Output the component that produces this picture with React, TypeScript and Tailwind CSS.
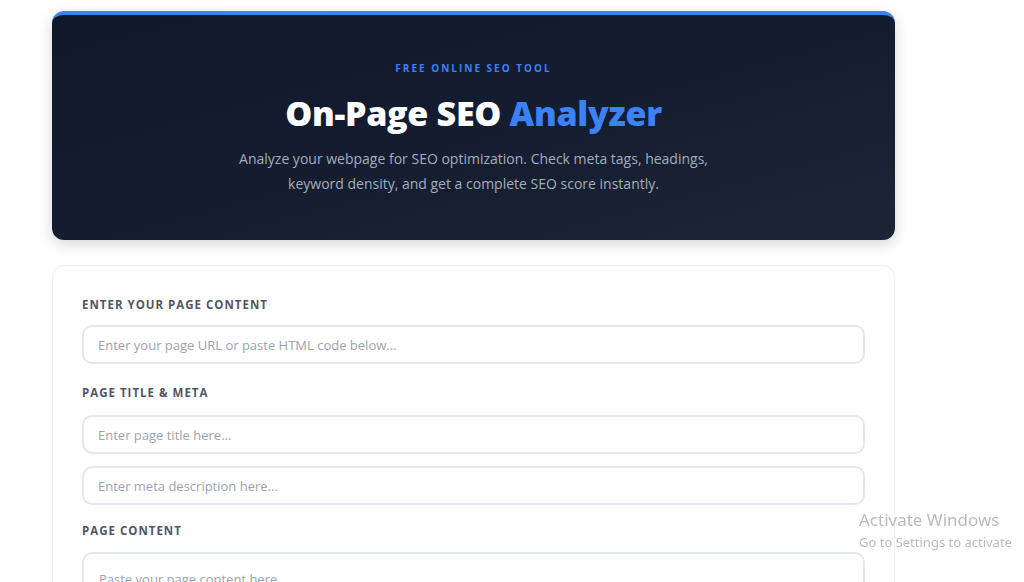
import React from "react";

const font = { fontFamily: '"Open Sans", "Noto Sans", sans-serif' };

function Hero() {
  return (
    <div className="rounded-xl border-t-4 border-[#3b82f6] bg-gradient-to-br from-[#101828] via-[#141d30] to-[#1c2536] px-10 pt-[46px] pb-[44px] text-center shadow-[0_4px_14px_rgba(15,23,42,0.18)]">
      <p className="text-[10px] font-bold uppercase tracking-[2px] text-[#3b82f6]">
        Free Online SEO Tool
      </p>
      <h1 className="mt-[16px] text-[34px] leading-[42px] font-extrabold tracking-[-0.3px] text-white">
        On-Page SEO <span className="text-[#3b82f6]">Analyzer</span>
      </h1>
      <p className="mx-auto mt-[12px] max-w-[490px] text-[14px] leading-[25px] text-[#a3adbd]">
        Analyze your webpage for SEO optimization. Check meta tags, headings,
        keyword density, and get a complete SEO score instantly.
      </p>
    </div>
  );
}

function Label({ children }: { children: React.ReactNode }) {
  return (
    <label className="block text-[11.5px] leading-4 font-bold uppercase tracking-[1px] text-[#4f5764]">
      {children}
    </label>
  );
}

function Field({ placeholder }: { placeholder: string }) {
  return (
    <input
      type="text"
      placeholder={placeholder}
      className="h-[39px] w-full rounded-[10px] border-2 border-[#e3e8ef] bg-white px-[14px] text-[13px] text-[#374151] placeholder:text-[#9ca3af] outline-none"
    />
  );
}

export default function App() {
  return (
    <div className="min-h-screen bg-white" style={font}>
      <div className="w-[843px] ml-[52px] pt-[11px] pb-10">
        <Hero />

        <div className="mt-[25px] rounded-xl border border-[#eceef2] bg-white px-[29px] pt-[31px] pb-8">
          <Label>Enter your page content</Label>
          <div className="mt-[12px]">
            <Field placeholder="Enter your page URL or paste HTML code below..." />
          </div>

          <div className="mt-[21px]">
            <Label>Page title &amp; meta</Label>
          </div>
          <div className="mt-[14px] flex flex-col gap-3">
            <Field placeholder="Enter page title here..." />
            <Field placeholder="Enter meta description here..." />
          </div>

          <div className="mt-[18px]">
            <Label>Page content</Label>
          </div>
          <textarea
            placeholder="Paste your page content here..."
            className="mt-[13px] h-[180px] w-full resize-none rounded-[10px] border-2 border-[#e3e8ef] bg-white px-[15px] pt-[16px] text-[13px] text-[#374151] placeholder:text-[#9ca3af] outline-none"
          />
        </div>
      </div>

      {/* OS activation watermark */}
      <div className="pointer-events-none fixed left-[859px] top-[509px] text-[#b8bcc2]" style={{ fontFamily: '"Noto Sans", sans-serif' }}>
        <p className="text-[17px] leading-[22px]">Activate Windows</p>
        <p className="mt-[2px] text-[13px] leading-[18px] whitespace-nowrap">Go to Settings to activate</p>
      </div>
    </div>
  );
}
